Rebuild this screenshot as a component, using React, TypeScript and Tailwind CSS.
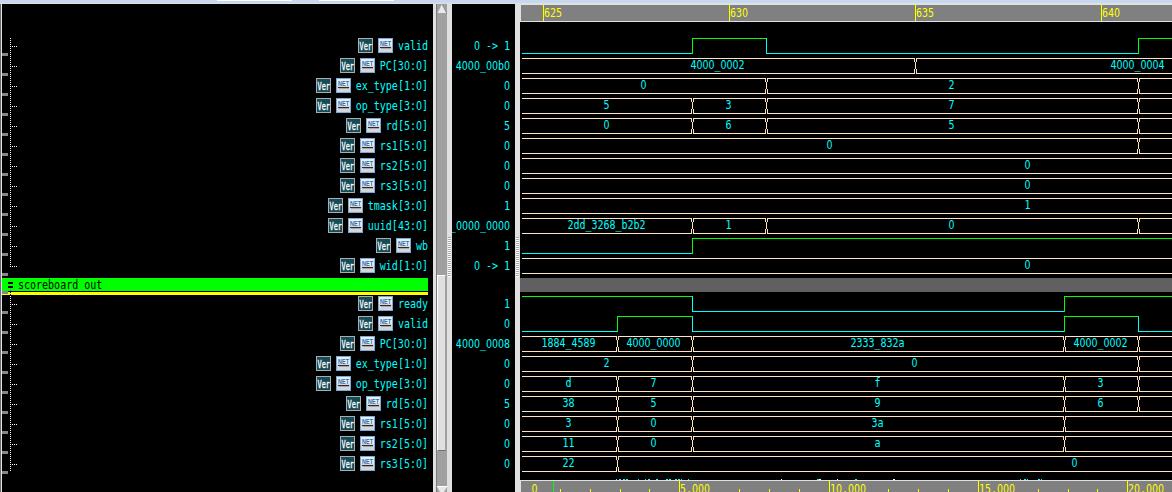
import React from "react";

type Kind = "bit" | "bus";
type Signal = {
  name: string;
  value: string;
  kind: Kind;
  start?: 0 | 1;
  edges: number[];
  labels?: [string, number][];
};

const issue: Signal[] = [
  { name: "valid", value: "0 -> 1", kind: "bit", start: 0, edges: [692, 766, 1138] },
  { name: "PC[30:0]", value: "4000_00b0", kind: "bus", edges: [915], labels: [["4000_0002", 717.5], ["4000_0004", 1137.5]] },
  { name: "ex_type[1:0]", value: "0", kind: "bus", edges: [766, 1138], labels: [["0", 643.5], ["2", 951.5]] },
  { name: "op_type[3:0]", value: "0", kind: "bus", edges: [692, 766, 1138], labels: [["5", 606.5], ["3", 728.5], ["7", 951.5]] },
  { name: "rd[5:0]", value: "5", kind: "bus", edges: [692, 766, 1138], labels: [["0", 606.5], ["6", 728.5], ["5", 951.5]] },
  { name: "rs1[5:0]", value: "0", kind: "bus", edges: [1138], labels: [["0", 829.5]] },
  { name: "rs2[5:0]", value: "0", kind: "bus", edges: [], labels: [["0", 1027.5]] },
  { name: "rs3[5:0]", value: "0", kind: "bus", edges: [], labels: [["0", 1027.5]] },
  { name: "tmask[3:0]", value: "1", kind: "bus", edges: [], labels: [["1", 1027.5]] },
  { name: "uuid[43:0]", value: "_0000_0000", kind: "bus", edges: [692, 766, 1138], labels: [["2dd_3268_b2b2", 606.5], ["1", 728.5], ["0", 951.5]] },
  { name: "wb", value: "1", kind: "bit", start: 0, edges: [692] },
  { name: "wid[1:0]", value: "0 -> 1", kind: "bus", edges: [], labels: [["0", 1027.5]] },
];

const scoreboard: Signal[] = [
  { name: "ready", value: "1", kind: "bit", start: 1, edges: [692, 1064] },
  { name: "valid", value: "0", kind: "bit", start: 0, edges: [617, 692, 1064, 1138] },
  { name: "PC[30:0]", value: "4000_0008", kind: "bus", edges: [617, 692, 1064, 1138], labels: [["1884_4589", 568.5], ["4000_0000", 653.5], ["2333_832a", 877.5], ["4000_0002", 1100.5]] },
  { name: "ex_type[1:0]", value: "0", kind: "bus", edges: [692, 1138], labels: [["2", 606.5], ["0", 914.5]] },
  { name: "op_type[3:0]", value: "0", kind: "bus", edges: [617, 692, 1064, 1138], labels: [["d", 568.5], ["7", 653.5], ["f", 877.5], ["3", 1100.5]] },
  { name: "rd[5:0]", value: "5", kind: "bus", edges: [617, 692, 1064, 1138], labels: [["38", 568.5], ["5", 653.5], ["9", 877.5], ["6", 1100.5]] },
  { name: "rs1[5:0]", value: "0", kind: "bus", edges: [617, 692, 1064], labels: [["3", 568.5], ["0", 653.5], ["3a", 877.5]] },
  { name: "rs2[5:0]", value: "0", kind: "bus", edges: [617, 692, 1064], labels: [["11", 568.5], ["0", 653.5], ["a", 877.5]] },
  { name: "rs3[5:0]", value: "0", kind: "bus", edges: [617], labels: [["22", 568.5], ["0", 1074.5]] },
];

/* Zeros are set in a face whose zero has no slash, sized to the same 6px advance. */
const plainZero = (text: string, Tag: "span" | "tspan") =>
  text.split(/(0+)/).map((part, i) =>
    part.startsWith("0") ? (
      <Tag key={i} className="font-['DejaVu_Sans_Condensed','DejaVu_Sans',sans-serif] text-[10.5px] leading-[0] [font-stretch:condensed]">
        {part}
      </Tag>
    ) : (
      part
    ),
  );

function Mono({ text }: { text: string }) {
  return (
    <span className="inline-block h-[12px] origin-center scale-y-[1.22] text-[10px] leading-[12px] whitespace-pre">
      {plainZero(text, "span")}
    </span>
  );
}

function SvgText({ text, x, base, fill, anchor = "middle" }: { text: string; x: number; base: number; fill: string; anchor?: "middle" | "start" }) {
  return (
    <text transform={`translate(${x} ${base}) scale(1 1.22)`} fill={fill} textAnchor={anchor} fontSize="10">
      {plainZero(text, "tspan")}
    </text>
  );
}

function VerIcon() {
  return (
    <svg width="15" height="15" viewBox="0 0 15 15" className="shrink-0">
      <rect width="15" height="15" fill="#a9adad" />
      <rect x="1" y="1" width="13" height="13" fill="#164c59" />
      <text transform="translate(1.5 11.5) scale(1 1.35)" fontSize="8" fill="#fff" stroke="#fff" strokeWidth=".25" textLength="12.5" lengthAdjust="spacingAndGlyphs">
        Ver
      </text>
    </svg>
  );
}

function NetIcon() {
  return (
    <svg width="15" height="15" viewBox="0 0 15 15" className="shrink-0">
      <rect width="15" height="15" fill="#78a9d8" />
      <rect x="1" y="1" width="13" height="13" fill="#e9edf3" />
      <rect x="1" y="8" width="13" height="6" fill="#d3d6dc" />
      <text x="2" y="7.6" fontSize="7" fontWeight="bold" fill="#2d6ea5" textLength="11" lengthAdjust="spacingAndGlyphs" className="font-['Liberation_Sans',sans-serif]">
        NET
      </text>
      <rect x="2" y="9" width="11" height="1" fill="#2a2a2a" />
      <rect x="3" y="10" width="10" height="1" fill="#a8a8a8" />
    </svg>
  );
}

function NameRow({ name }: { name: string }) {
  return (
    <div className="flex h-5 shrink-0 items-start justify-end gap-[5px]">
      <VerIcon />
      <NetIcon />
      <span className="flex pt-[2px]">
        <Mono text={name} />
      </span>
    </div>
  );
}

function ValueRow({ value }: { value: string }) {
  return (
    <div className="flex h-5 shrink-0 justify-end pt-[2px] pr-[5px]">
      <Mono text={value} />
    </div>
  );
}

const BUS = "#ffe4c4";
const X0 = 522;
const X1 = 1172;

function Wave({ s }: { s: Signal }) {
  const stops = [...s.edges, X1];
  const shapes: React.ReactNode[] = [];
  if (s.kind === "bit") {
    let level = s.start ?? 0;
    let from = X0;
    stops.forEach((to, i) => {
      shapes.push(<rect key={`h${i}`} x={from} y={level ? 0 : 15} width={to - from + 1} height={1} fill={level ? "#00ff00" : "#00ffff"} />);
      if (i < s.edges.length) {
        level = level ? 0 : 1;
        shapes.push(<rect key={`v${i}`} x={to} y={0} width={1} height={16} fill={level ? "#00ff00" : "#00ffff"} />);
      }
      from = to;
    });
  } else {
    let from = X0;
    stops.forEach((to, i) => {
      shapes.push(<path key={`b${i}`} d={`M${from} 0H${to}V1H${from}ZM${from} 15H${to}V16H${from}Z`} fill={BUS} />);
      if (i < s.edges.length)
        shapes.push(
          <path
            key={`t${i}`}
            d={`M${to - 1} 0h1v4h-1zM${to + 1} 0h1v4h-1zM${to} 4h1v7h-1zM${to - 1} 11h1v5h-1zM${to + 1} 11h1v5h-1z`}
            fill={BUS}
          />,
        );
      from = to + 1;
    });
  }
  return (
    <svg width="652" height="20" viewBox="520 0 652 20" className="block shrink-0">
      <g shapeRendering="crispEdges">{shapes}</g>
      {s.labels?.map(([t, x]) => <SvgText key={x} text={t} x={x} base={11} fill="#00ffff" />)}
    </svg>
  );
}

function Tree() {
  const first = issue.map((_, i) => 46 + 20 * i);
  const second = scoreboard.map((_, i) => 304 + 20 * i);
  const ticks = [...issue.map((_, i) => 53 + 20 * i), ...Array.from({ length: 10 }, (_, i) => 291 + 20 * i)];
  return (
    <svg width="20" height="488" viewBox="2 4 20 488" shapeRendering="crispEdges" className="block">
      {ticks.map((y) => (
        <rect key={y} x="2" y={y} width="6" height="3" fill="#878787" />
      ))}
      <path d="M10.5 38V267M10.5 296V471" stroke="#fff" strokeDasharray="1 1" />
      {[...first, ...second].map((y) => (
        <path key={y} d={`M10 ${y + 0.5}H17`} stroke="#fff" strokeDasharray="1 1" />
      ))}
    </svg>
  );
}

function Grip() {
  return (
    <svg width="3" height="40" viewBox="0 0 3 40" shapeRendering="crispEdges">
      <rect width="3" height="40" fill="#fff" />
      <path d="M1.5 0V40" stroke="#a8a8a8" strokeWidth="3" strokeDasharray="1 1" />
    </svg>
  );
}

function Names() {
  return (
    <div className="relative flex w-[431px] shrink-0 flex-col bg-black text-[#00ffff]">
      <div className="h-[34px] shrink-0" />
      <div className="flex flex-col pr-[5px]">
        {issue.map((s) => (
          <NameRow key={s.name} name={s.name} />
        ))}
      </div>
      <div className="flex h-[13px] w-[426px] shrink-0 items-center gap-[5px] bg-[#00ff00] pl-[6px] text-black">
        <span className="flex w-[5px] flex-col gap-[2px]">
          <i className="h-[2px] bg-black" />
          <i className="h-[2px] bg-black" />
        </span>
        <span className="flex pt-px">
          <Mono text="scoreboard out" />
        </span>
      </div>
      <div className="mt-px mb-px h-[3px] w-[426px] shrink-0 bg-[#ffff00]" />
      <div className="flex flex-col pr-[5px]">
        {scoreboard.map((s) => (
          <NameRow key={s.name} name={s.name} />
        ))}
      </div>
      <div className="absolute top-0 left-0">
        <Tree />
      </div>
      <svg width="1" height="5" className="absolute top-[286px] left-[8px]" shapeRendering="crispEdges">
        <rect width="1" height="1" fill="#ff00ff" />
        <rect y="2" width="1" height="1" fill="#0000ff" />
        <rect y="4" width="1" height="1" fill="#0000ff" />
      </svg>
    </div>
  );
}

function Scrollbar() {
  return (
    <div className="flex w-[19px] shrink-0 bg-[#e0e0e0] pl-[3px]">
      <div className="flex w-[11px] flex-col border-l border-[#7c7c7c] bg-[#a0a0a0]">
        <svg width="10" height="10" viewBox="0 0 10 10" className="shrink-0">
          <path d="M5 0L10 10H0Z" fill="#e8e8e8" />
          <path d="M5 0L10 9.6H0" fill="none" stroke="#777" strokeWidth=".7" />
        </svg>
        <div className="mt-[261px] h-[176px] w-[9px] shrink-0 border-t border-r border-b border-l border-t-white border-r-[#a0a0a0] border-b-[#707070] border-l-white bg-[#e0e0e0]" />
        <div className="h-[35px] shrink-0" />
        <svg width="10" height="6" viewBox="0 0 10 6" className="shrink-0">
          <path d="M0 1H10L7 6H3Z" fill="#e8e8e8" />
          <path d="M0 .5H10" stroke="#fff" />
        </svg>
      </div>
      <div className="flex w-[5px] flex-col items-center pt-[233px]">
        <Grip />
      </div>
    </div>
  );
}

function Values() {
  return (
    <div className="flex w-[63px] shrink-0 flex-col overflow-hidden bg-black pt-[34px] text-[#00ffff]">
      {issue.map((s) => (
        <ValueRow key={s.name} value={s.value} />
      ))}
      <div className="h-[18px] shrink-0" />
      {scoreboard.map((s) => (
        <ValueRow key={s.name} value={s.value} />
      ))}
    </div>
  );
}

function TopRuler() {
  return (
    <svg width="652" height="18" viewBox="520 4 652 18" className="block shrink-0">
      <rect x="520" y="4" width="652" height="18" fill="#e0e0e0" />
      <rect x="521" y="5" width="651" height="16" fill="#808080" />
      {[543, 729, 915, 1101].map((x, i) => (
        <g key={x}>
          <rect x={x} y="4" width="1" height="17" fill="#ffff00" />
          <SvgText text={String(625 + i * 5)} x={x + 1} base={17} fill="#ffff00" anchor="start" />
        </g>
      ))}
    </svg>
  );
}

function BottomRuler() {
  const minor = [560, 590, 620, 649, 739, 769, 799, 888, 918, 948, 1038, 1068, 1097];
  return (
    <svg width="652" height="14" viewBox="520 478 652 14" className="block shrink-0">
      <path d="M616 479.5h1M619 479.5h3M623 479.5h6M638 479.5h1M645 479.5h1M648 479.5h2M656 479.5h2M666 479.5h6M675 479.5h7M688 479.5h1M817 479.5h4M855 479.5h3M1020 479.5h1M1024 479.5h4M1038 479.5h4" stroke="#00ffff" strokeDasharray="2 1" />
      <path d="M781 479.5h1M819 479.5h2M837 479.5h1M893 479.5h2" stroke="#fff" />
      <rect x="520" y="480" width="652" height="12" fill="#e0e0e0" />
      <rect x="521" y="481" width="651" height="11" fill="#808080" />
      {minor.map((x) => (
        <rect key={x} x={x} y="489" width="1" height="3" fill="#ffff00" />
      ))}
      {[679, 829, 978, 1127].map((x, i) => (
        <g key={x}>
          <rect x={x} y="480" width="1" height="12" fill="#ffff00" />
          <SvgText text={["5.000", "10.000", "15.000", "20.000"][i]} x={x + 1} base={493} fill="#ffff00" anchor="start" />
        </g>
      ))}
      <rect x="530" y="480" width="1" height="1" fill="#ffff00" />
      <SvgText text="0" x={534.5} base={493} fill="#ffff00" />
      <rect x="553" y="481" width="1" height="11" fill="#00ff00" />
    </svg>
  );
}

export default function App() {
  return (
    <div className="flex h-[492px] w-[1172px] flex-col overflow-hidden bg-[#e0e0e0] font-['DejaVu_Sans_Mono',monospace]">
      <div className="flex h-[3px] shrink-0 bg-[#c6d9f1]">
        <div className="ml-[217px] h-px w-[75px] bg-white" />
        <div className="ml-[27px] h-px w-[75px] bg-white" />
      </div>
      <div className="h-px shrink-0 bg-[#e0e0e0]" />
      <div className="flex h-[488px]">
        <div className="w-[2px] shrink-0 border-r border-l border-r-[#e6e6e6] border-l-[#696969]" />
        <Names />
        <Scrollbar />
        <Values />
        <div className="flex w-[5px] shrink-0 flex-col items-center bg-[#e0e0e0] pt-[233px]">
          <Grip />
        </div>
        <div className="flex w-[652px] shrink-0 flex-col bg-black">
          <TopRuler />
          <div className="h-4 shrink-0" />
          {issue.map((s) => (
            <Wave key={s.name} s={s} />
          ))}
          <div className="mb-1 h-[14px] shrink-0 bg-[#606060]" />
          {scoreboard.map((s) => (
            <Wave key={s.name} s={s} />
          ))}
          <div className="h-[2px] shrink-0" />
          <BottomRuler />
        </div>
      </div>
    </div>
  );
}
